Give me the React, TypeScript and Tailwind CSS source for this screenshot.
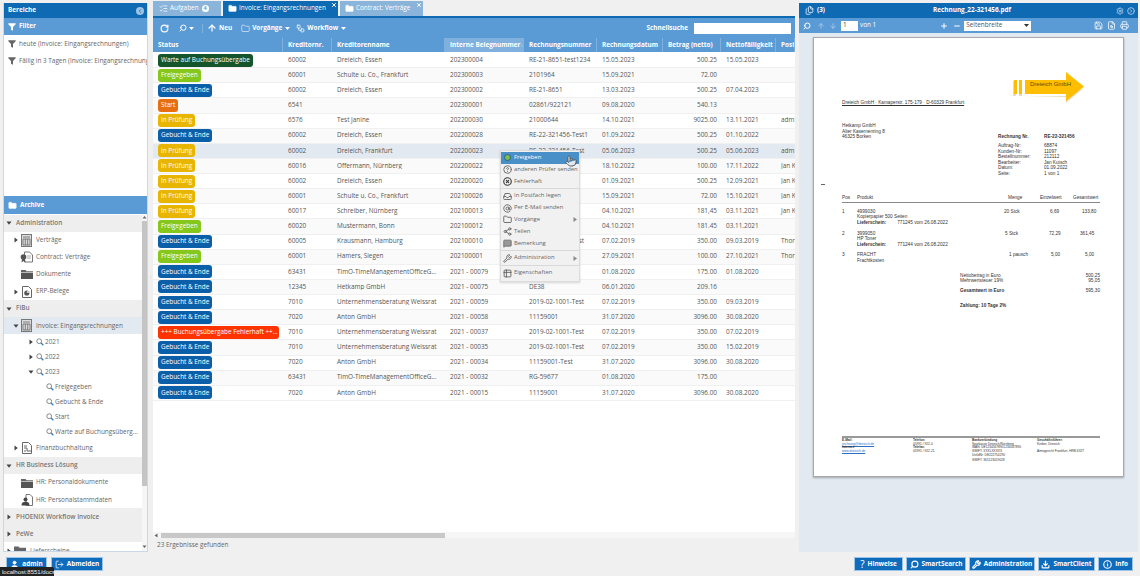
import React from 'react';
import {
  Search, RotateCw, ArrowUp, ArrowDown, Folder, Workflow, X, ChevronLeft, Plus, Minus, Save, FileSearch, Printer,
  Settings, ChevronRightCircle, HelpCircle, XCircle, Inbox, AtSign, Share2, Wrench, Download, Info, User, LogOut, Files, ListChecks, MessageSquare, Table2, Pointer,
} from 'lucide-react';

type Row = [string, string, string, string, string, string, string, string, string];

const W = 'Warte auf Buchungsübergabe';
const F = 'Freigegeben';
const G = 'Gebucht & Ende';
const S = 'Start';
const P = 'In Prüfung';
const E = '+++ Buchungsübergabe Fehlerhaft ++...';

const rows: Row[] = [
  [W, '60002', 'Dreieich, Essen', '202300004', 'RE-21-8651-test1234', '15.05.2023', '500.25', '15.05.2023', ''],
  [F, '60001', 'Schulte u. Co., Frankfurt', '202300003', '2101964', '15.09.2021', '72.00', '', ''],
  [G, '60002', 'Dreieich, Essen', '202300002', 'RE-21-8651', '13.03.2023', '500.25', '07.04.2023', ''],
  [S, '6541', '', '202300001', '02861/922121', '09.08.2020', '540.13', '', ''],
  [P, '6576', 'Test Janine', '202200030', '21000644', '14.10.2021', '9025.00', '13.11.2021', 'adm'],
  [G, '60002', 'Dreieich, Essen', '202200028', 'RE-22-321456-Test1', '01.09.2022', '500.25', '01.10.2022', ''],
  [P, '60002', 'Dreieich, Frankfurt', '202200023', 'RE-22-321456-Test', '05.06.2023', '500.25', '05.06.2023', 'adm'],
  [P, '60016', 'Offermann, Nürnberg', '202200022', '', '18.10.2022', '100.00', '17.11.2022', 'Jan K'],
  [P, '60002', 'Dreieich, Essen', '202200020', '', '01.09.2021', '500.25', '12.09.2021', 'Jan K'],
  [P, '60001', 'Schulte u. Co., Frankfurt', '202100026', '', '15.09.2021', '72.00', '15.10.2021', 'Jan K'],
  [P, '60017', 'Schreiber, Nürnberg', '202100013', '', '04.10.2021', '181,45', '03.11.2021', 'Jan K'],
  [F, '60020', 'Mustermann, Bonn', '202100012', '', '04.10.2021', '181.45', '03.11.2021', ''],
  [G, '60005', 'Krausmann, Hamburg', '202100010', '2019-02-1001-Test', '07.02.2019', '350.00', '09.03.2019', 'Thor'],
  [F, '60001', 'Hamers, Siegen', '202100001', '', '27.09.2021', '100.00', '27.10.2021', 'Thor'],
  [G, '63431', 'TimO-TimeManagementOfficeG...', '2021 - 00079', '', '01.08.2020', '175.00', '01.08.2020', ''],
  [G, '12345', 'Hetkamp GmbH', '2021 - 00075', 'DE38', '06.01.2020', '209.16', '', ''],
  [G, '7010', 'Unternehmensberatung Weissrat', '2021 - 00059', '2019-02-1001-Test', '07.02.2019', '350.00', '09.03.2019', ''],
  [G, '7020', 'Anton GmbH', '2021 - 00058', '11159001', '31.07.2020', '3096.00', '30.08.2020', ''],
  [E, '7010', 'Unternehmensberatung Weissrat', '2021 - 00037', '2019-02-1001-Test', '07.02.2019', '350.00', '07.02.2019', ''],
  [G, '7010', 'Unternehmensberatung Weissrat', '2021 - 00035', '2019-02-1001-Test', '07.02.2019', '350.00', '15.02.2019', ''],
  [G, '7020', 'Anton GmbH', '2021 - 00034', '11159001-Test', '31.07.2020', '3096.00', '30.08.2020', ''],
  [G, '63431', 'TimO-TimeManagementOfficeG...', '2021 - 00032', 'RG-59677', '01.08.2020', '175.00', '', ''],
  [G, '7020', 'Anton GmbH', '2021 - 00015', '11159001', '31.07.2020', '3096.00', '30.08.2020', ''],
];

const badgeClass: Record<string, string> = {
  [W]: 'bg-[#14552c]',
  [F]: 'bg-[#86c71c]',
  [G]: 'bg-[#0b5fa9]',
  [S]: 'bg-[#e86f10]',
  [P]: 'bg-[#e8b500]',
  [E]: 'bg-[#ff3300]',
};

const cols = 'grid grid-cols-[130px_49px_113px_79px_73px_66px_58px_55px_19px]';

const Caret = ({ open = false }: { open?: boolean }) => (
  <svg width="6" height="6" viewBox="0 0 6 6" className="shrink-0 text-[#444]">
    {open ? <path d="M0.5 1.5h5L3 4.8z" fill="currentColor" /> : <path d="M1.5 0.5v5L4.8 3z" fill="currentColor" />}
  </svg>
);

const DownCaret = () => (
  <svg width="5" height="3" viewBox="0 0 5 3" className="shrink-0"><path d="M0 0h5L2.5 3z" fill="currentColor" /></svg>
);

const Funnel = ({ size = 8, color = '#666' }: { size?: number; color?: string }) => (
  <svg width={size} height={size} viewBox="0 0 12 12" className="shrink-0">
    <path d="M0.5 0.5h11v1.5L7.5 6v5.5L4.5 10V6L0.5 2z" fill={color} />
  </svg>
);

const Mag = () => (
  <svg width="8" height="8" viewBox="0 0 12 12" className="shrink-0">
    <circle cx="4.8" cy="4.8" r="3.6" fill="#fff" stroke="#777" strokeWidth="1.3" />
    <path d="M7.6 7.6l3.4 3.4" stroke="#2f80c8" strokeWidth="2" />
  </svg>
);

const TableDoc = () => (
  <svg width="11" height="13" viewBox="0 0 11 13" className="shrink-0">
    <rect x="0.5" y="0.5" width="10" height="12" fill="#ddd" stroke="#777" />
    <path d="M2 3h7M2 5h7v6H2zM4.3 5v6M6.7 5v6" fill="none" stroke="#666" strokeWidth="0.8" />
  </svg>
);

const ContractDoc = () => (
  <svg width="13" height="12" viewBox="0 0 13 12" className="shrink-0">
    <path d="M4.5 1h5l3 3v7h-8z" fill="#fff" stroke="#777" />
    <circle cx="3.5" cy="6" r="2.8" fill="#555" />
    <path d="M2 8l-0.5 3.5L3.5 10l2 1.5L5 8z" fill="#555" />
    <path d="M7 5h4M7 7h4" stroke="#888" strokeWidth="0.7" />
  </svg>
);

const DarkFolder = () => (
  <svg width="12" height="10" viewBox="0 0 12 10" className="shrink-0">
    <path d="M0 1h4.5l1 1.3H12V3H0z" fill="#666" />
    <path d="M0 3.6h12V10H0z" fill="#555" />
  </svg>
);

const ChartDoc = () => (
  <svg width="10" height="12" viewBox="0 0 10 12" className="shrink-0">
    <path d="M0.5 0.5h6l3 3v8h-9z" fill="#fff" stroke="#666" />
    <circle cx="4.8" cy="7" r="2.6" fill="#555" />
    <path d="M4.8 7V4.4A2.6 2.6 0 0 1 7.4 7z" fill="#ccc" />
  </svg>
);

const LinesDoc = () => (
  <svg width="10" height="12" viewBox="0 0 10 12" className="shrink-0">
    <path d="M0.5 0.5h6l3 3v8h-9z" fill="#fff" stroke="#666" />
    <path d="M2 4h3M2 6h3v3h4M2 9h2" fill="none" stroke="#555" strokeWidth="0.9" />
  </svg>
);

const PersonDoc = () => (
  <svg width="12" height="12" viewBox="0 0 12 12" className="shrink-0">
    <path d="M5 0.5h4l2.500 2.500v8.500H5z" fill="#fff" stroke="#777" />
    <circle cx="4.500" cy="5.500" r="2" fill="#444" />
    <path d="M0.500 11.500c0-3 1.500-3.800 4-3.800s4 .8 4 3.800z" fill="#444" />
  </svg>
);

const GreenFolder = () => (
  <svg width="12" height="10" viewBox="0 0 12 10" className="shrink-0">
    <path d="M0 0.500h4.500l1 1.300H12V10H0z" fill="#666" />
    <rect x="5" y="5" width="6" height="5" fill="#7ab648" />
  </svg>
);

const GroupHeader = ({ label, open = false }: { label: string; open?: boolean }) => (
  <div className="flex h-[17.100px] items-center bg-[#eeeeee] pl-[2px] text-[#777] font-semibold">
    <Caret open={open} />
    <span className="ml-[4px]">{label}</span>
  </div>
);

const TreeItem = ({ label, icon, arrow = false, open = false, selected = false }: { label: string; icon: React.ReactNode; arrow?: boolean; open?: boolean; selected?: boolean }) => (
  <div className={`flex h-[17.100px] items-center ${selected ? 'bg-[#e3e9f1]' : ''}`}>
    <div className="flex w-[16px] justify-end pr-[1px]">{arrow && <Caret open={open} />}</div>
    <div className="flex w-[13px] justify-center">{icon}</div>
    <span className="ml-[3px] whitespace-nowrap text-[#666]">{label}</span>
  </div>
);

const YearItem = ({ label, open = false }: { label: string; open?: boolean }) => (
  <div className="flex h-[15.100px] items-center pl-[24px]">
    <Caret open={open} />
    <span className="ml-[2px]"><Mag /></span>
    <span className="ml-[1px] text-[#666]">{label}</span>
  </div>
);

const SearchItem = ({ label }: { label: string }) => (
  <div className="flex h-[15.100px] items-center pl-[42px]">
    <Mag />
    <span className="ml-[1px] whitespace-nowrap text-[#666]">{label}</span>
  </div>
);

const FooterButton = ({ icon, label, className }: { icon: React.ReactNode; label: string; className: string }) => (
  <div className={`flex h-[14px] items-center justify-center gap-[3px] border border-[#9cc3e6] bg-[#0f6cbd] text-[6.400px] font-bold text-white ${className}`}>
    {icon}
    <span>{label}</span>
  </div>
);

const MenuItem = ({ icon, label, active = false, sub = false }: { icon: React.ReactNode; label: string; active?: boolean; sub?: boolean }) => (
  <div className={`flex h-[11.800px] items-center pl-[2px] ${active ? 'bg-[#4a90c8] text-white' : 'text-[#666]'}`}>
    <span className="flex w-[9px] justify-center">{icon}</span>
    <span className="ml-[2px] flex-1 whitespace-nowrap">{label}</span>
    {sub && <span className="mr-[2px] text-[#888]"><svg width="4" height="5" viewBox="0 0 4 5"><path d="M0.500 0v5L4 2.500z" fill="currentColor" /></svg></span>}
  </div>
);

const Sep = () => <div className="my-[1px] h-[1px] bg-[#d8d8d8]" />;

const PdfLine = ({ children, className = '' }: { children?: React.ReactNode; className?: string }) => (
  <div className={`h-[5.500px] whitespace-nowrap leading-[5.500px] ${className}`}>{children}</div>
);

const PdfGrid = ({ children }: { children: React.ReactNode }) => (
  <div className="grid h-[5.500px] grid-cols-[15px_147px_36px_33px_27px] whitespace-nowrap leading-[5.500px]">{children}</div>
);

const PdfPage = () => (
  <div className="ml-[14px] mt-[4px] flex h-[440px] w-[311px] flex-col border border-[#a9a9a9] bg-white pl-[28px] pr-[23px] pb-[13px] font-['Liberation_Sans',sans-serif] text-[4.700px] text-[#333] shadow-[0_1px_2px_rgba(0,0,0,0.3)]">
    <div className="mt-[33px] flex h-[35px] items-end justify-between">
      <span className="underline">Dreieich GmbH · Kamaperstr. 175-179 · D-60329 Frankfurt</span>
      <div className="relative mr-[15px] h-[32px] w-[72px] self-start">
        <svg width="72" height="32" viewBox="0 0 72 32">
          <path d="M0 10h3v15H0zM6 10h3v15H6zM12 25h41v7l19-16L53 26z" fill="#e8dcb8" />
          <path d="M1 9h3v14H1zM6 9h3v14H6zM12 9h41V1l18 14.500L53 30v-7H12z" fill="#ffbf00" />
        </svg>
        <span className="absolute left-[17px] top-[9.500px] whitespace-nowrap text-[6px] leading-[7px] text-[#5a4a00]">Dreieich GmbH</span>
      </div>
    </div>
    <div className="mt-[17px] flex">
      <div className="w-[156px]">
        <PdfLine>Hetkamp GmbH</PdfLine>
        <PdfLine>Alter Kasernenring 8</PdfLine>
        <PdfLine>46325 Borken</PdfLine>
      </div>
      <div className="pt-[10.500px]">
        <div className="flex font-bold">
          <PdfLine className="w-[46px]">Rechnung Nr.</PdfLine>
          <PdfLine>RE-22-321456</PdfLine>
        </div>
        <div className="mt-[4px] grid grid-cols-[46px_auto]">
          <PdfLine>Auftrag-Nr:</PdfLine><PdfLine>68874</PdfLine>
          <PdfLine>Kunden-Nr:</PdfLine><PdfLine>11097</PdfLine>
          <PdfLine>Bestellnummer:</PdfLine><PdfLine>212112</PdfLine>
          <PdfLine>Bearbeiter:</PdfLine><PdfLine>Jan Kutsch</PdfLine>
          <PdfLine>Datum:</PdfLine><PdfLine>01.09.2022</PdfLine>
          <PdfLine>Seite:</PdfLine><PdfLine>1 von 1</PdfLine>
        </div>
      </div>
    </div>
    <div className="ml-[-21px] mt-[7.500px] h-[1px] w-[4px] bg-[#666]" />
    <div className="mt-[10.500px]">
      <PdfGrid>
        <span>Pos</span><span>Produkt</span><span className="pl-[4px]">Menge</span><span>Einzelwert</span><span>Gesamtwert</span>
      </PdfGrid>
    </div>
    <div className="mt-[1px] h-[1.500px] bg-[#888]" />
    <div className="mt-[5.500px]">
      <PdfGrid><span>1</span><span>4999030</span><span>20 Stck</span><span className="pl-[10px]">6,69</span><span className="pl-[9px]">133,80</span></PdfGrid>
      <PdfGrid><span /><span>Kopierpapier 500 Seiten</span></PdfGrid>
      <PdfGrid><span /><span className="font-bold">Lieferschein:<span className="ml-[11px] font-normal">771245 vom 26.08.2022</span></span></PdfGrid>
    </div>
    <div className="mt-[5.500px]">
      <PdfGrid><span>2</span><span>3999050</span><span className="pl-[1px]">5 Stck</span><span className="pl-[9px]">72,29</span><span className="pl-[7px]">361,45</span></PdfGrid>
      <PdfGrid><span /><span>HP Toner</span></PdfGrid>
      <PdfGrid><span /><span className="font-bold">Lieferschein:<span className="ml-[11px] font-normal">771244 vom 26.08.2022</span></span></PdfGrid>
    </div>
    <div className="mt-[5px]">
      <PdfGrid><span>3</span><span>FRACHT</span><span className="pl-[5px]">1 pausch</span><span className="pl-[11px]">5,00</span><span className="pl-[12px]">5,00</span></PdfGrid>
      <PdfGrid><span /><span>Frachtkosten</span></PdfGrid>
    </div>
    <div className="ml-[118px] mt-[9.500px]">
      <div className="flex justify-between"><PdfLine>Nettobetrag in Euro</PdfLine><PdfLine>500,25</PdfLine></div>
      <div className="flex justify-between"><PdfLine>Mehrwertsteuer 19%</PdfLine><PdfLine>95,05</PdfLine></div>
      <div className="mt-[4.500px] flex justify-between font-bold"><PdfLine>Gesamtwert in Euro</PdfLine><PdfLine className="font-normal">595,30</PdfLine></div>
      <PdfLine className="mt-[9.500px] font-bold">Zahlung: 10 Tage 2%</PdfLine>
    </div>
    <div className="mt-auto h-[2px] bg-[#999]" />
    <div className="mt-[1px] grid grid-cols-[71px_59px_65px_1fr] text-[3.200px] leading-[3.600px]">
      <div>
        <div className="font-bold">E-Mail:</div>
        <div className="text-[#2a6fc4] underline">rechnung@dreieich.de</div>
        <div className="font-bold">Internet:</div>
        <div className="text-[#2a6fc4] underline">www.dreieich.de</div>
      </div>
      <div>
        <div className="font-bold">Telefon:</div>
        <div>05991 / 922-0</div>
        <div className="font-bold">Telefax:</div>
        <div>05991 / 922-21</div>
      </div>
      <div>
        <div className="font-bold">Bankverbindung</div>
        <div>Sparkasse Dreieich/Nürnberg</div>
        <div>IBAN: DE12345678901234567890</div>
        <div>SWIFT: XXXLXXXXX</div>
        <div className="mt-[0.500px]">UstIdNr: DE222754290</div>
        <div className="mt-[2px]">SWIFT: 365123019028</div>
      </div>
      <div>
        <div className="font-bold">Geschäftsführer:</div>
        <div>Kerber, Dreieich</div>
        <div className="mt-[3.600px]">Amtsgericht Frankfurt, HRB 6327</div>
      </div>
    </div>
  </div>
);

export default function App() {
  return (
    <div className="relative flex h-[576px] w-[1140px] flex-col overflow-hidden bg-[#f0f0f0] font-['Open_Sans',sans-serif] text-[6.400px] leading-none text-[#555]">
      <div className="flex h-[553px] pl-[3px]">
        {/* Bereiche */}
        <div className="mt-[3px] flex h-[549px] w-[145px] flex-col overflow-hidden border-x border-b border-[#c9d8e8] bg-white">
          <div className="flex h-[15px] shrink-0 items-center justify-between bg-[#0f6ab4] pl-[4px] pr-[3px] font-bold text-white">
            <span>Bereiche</span>
            <span className="flex h-[8px] w-[8px] items-center justify-center rounded-full bg-[#9cc3e6]"><ChevronLeft size={6} strokeWidth={3} className="text-[#0f6ab4]" /></span>
          </div>
          <div className="flex h-[17px] shrink-0 items-center gap-[3px] bg-[#5b9bd5] pl-[4px] font-bold text-white">
            <Funnel color="#fff" />
            <span>Filter</span>
          </div>
          <div className="flex h-[161px] shrink-0 flex-col overflow-hidden whitespace-nowrap pt-[1px] text-[#666]">
            <div className="flex h-[16.500px] items-center gap-[3px] pl-[4px]"><Funnel />heute (Invoice: Eingangsrechnungen)</div>
            <div className="flex h-[16.500px] items-center gap-[3px] pl-[4px]"><Funnel />Fällig in 3 Tagen (Invoice: Eingangsrechnung</div>
          </div>
          <div className="flex h-[18px] shrink-0 items-center gap-[3px] bg-[#5b9bd5] pl-[4px] font-bold text-white">
            <Folder size={9} fill="#fff" strokeWidth={1} />
            <span>Archive</span>
          </div>
          <div className="flex min-h-0 flex-1">
            <div className="w-[139px] overflow-hidden pt-[0.600px]">
              <GroupHeader label="Administration" open />
              <TreeItem label="Verträge" icon={<TableDoc />} arrow />
              <TreeItem label="Contract: Verträge" icon={<ContractDoc />} />
              <TreeItem label="Dokumente" icon={<DarkFolder />} />
              <TreeItem label="ERP-Belege" icon={<ChartDoc />} arrow />
              <GroupHeader label="FiBu" open />
              <TreeItem label="Invoice: Eingangsrechnungen" icon={<TableDoc />} arrow open selected />
              <YearItem label="2021" />
              <YearItem label="2022" />
              <YearItem label="2023" open />
              <SearchItem label="Freigegeben" />
              <SearchItem label="Gebucht & Ende" />
              <SearchItem label="Start" />
              <SearchItem label="Warte auf Buchungsüberg..." />
              <TreeItem label="Finanzbuchhaltung" icon={<LinesDoc />} arrow />
              <GroupHeader label="HR Business Lösung" open />
              <TreeItem label="HR: Personaldokumente" icon={<DarkFolder />} />
              <TreeItem label="HR: Personalstammdaten" icon={<PersonDoc />} />
              <GroupHeader label="PHOENIX Workflow Invoice" />
              <GroupHeader label="PeWe" />
              <div className="flex h-[17px] items-center pl-[2px] text-[#666]">
                <Caret />
                <span className="ml-[2px]"><GreenFolder /></span>
                <span className="ml-[4px]">Lieferscheine</span>
              </div>
            </div>
            <div className="flex w-[5px] flex-col items-center bg-[#f6f6f6] pt-[1px]">
              <svg width="5" height="4" viewBox="0 0 5 4" className="shrink-0 text-[#666]"><path d="M2.500 1L4.500 3.500h-4z" fill="currentColor" /></svg>
              <div className="mt-[2px] h-[265px] w-full bg-[#c4c4c4]" />
              <svg width="5" height="4" viewBox="0 0 5 4" className="mt-auto mb-[2px] shrink-0 text-[#666]"><path d="M2.500 3L4.500 0.500h-4z" fill="currentColor" /></svg>
            </div>
          </div>
        </div>

        <div className="flex w-[5px] items-center justify-center"><ChevronLeft size={6} className="text-[#ccc]" /></div>

        {/* Liste */}
        <div className="flex h-[553px] w-[642px] flex-col">
          <div className="flex h-[16px] shrink-0 items-end gap-[2px] pt-[1px] whitespace-nowrap">
            <div className="flex h-[15px] w-[68px] items-center gap-[2px] bg-[#8ab4da] pl-[6px] text-white">
              <ListChecks size={9} />
              <span>Aufgaben</span>
              <span className="ml-[1px] flex h-[7px] w-[7px] items-center justify-center rounded-full bg-white text-[5.500px] font-bold text-[#5b9bd5]">4</span>
            </div>
            <div className="relative flex h-[15px] w-[115px] items-center gap-[2px] bg-[#0f6ab4] pl-[5px] text-white">
              <Folder size={9} fill="#fff" strokeWidth={1} />
              <span>Invoice: Eingangsrechnungen</span>
              <X size={6} strokeWidth={4} className="absolute right-[1px] top-[1px]" />
            </div>
            <div className="relative flex h-[15px] w-[83px] items-center gap-[2px] bg-[#8ab4da] pl-[5px] text-white">
              <Folder size={9} fill="#fff" strokeWidth={1} />
              <span>Contract: Verträge</span>
              <X size={6} strokeWidth={4} className="absolute right-[1px] top-[1px]" />
            </div>
          </div>
          <div className="h-[2px] shrink-0 bg-[#0f6ab4]" />
          <div className="flex h-[20px] shrink-0 items-center bg-[#5b9bd5] font-bold text-white">
            <RotateCw size={9} strokeWidth={3} className="ml-[7px]" />
            <Search size={8} strokeWidth={3} className="ml-[10px] -scale-x-100" />
            <span className="ml-[2px]"><DownCaret /></span>
            <div className="ml-[8px] h-[9px] w-[1px] bg-[#7fb0de]" />
            <ArrowUp size={10} strokeWidth={3} className="ml-[4px]" />
            <span className="ml-[2px]">Neu</span>
            <Folder size={9} strokeWidth={1.500} className="ml-[9px]" />
            <span className="ml-[2px]">Vorgänge</span>
            <span className="ml-[3px]"><DownCaret /></span>
            <Workflow size={9} className="ml-[6px]" />
            <span className="ml-[2px]">Workflow</span>
            <span className="ml-[3px]"><DownCaret /></span>
            <span className="ml-auto">Schnellsuche</span>
            <div className="ml-[6px] mr-[4px] h-[11px] w-[97px] bg-white" />
          </div>
          <div className={`${cols} h-[14px] shrink-0 items-center bg-[#5b9bd5] font-bold text-white`}>
            {['Status', 'Kreditornr.', 'Kreditorenname', 'Interne Belegnummer', 'Rechnungsnummer', 'Rechnungsdatum', 'Betrag (netto)', 'Nettofälligkeit', 'Post'].map((h, i) => (
              <div key={h} className={`flex h-full items-center overflow-hidden whitespace-nowrap border-r border-[#7fb0de] pl-[5px] ${i === 3 ? 'bg-[#7fb0de]' : ''}`}>
                {h}
                {i === 3 && <ArrowDown size={7} strokeWidth={3} className="ml-[1px]" />}
              </div>
            ))}
          </div>
          <div className="relative min-h-0 flex-1 overflow-hidden bg-white pt-[1px]">
            {rows.map((r, idx) => (
              <div key={idx} className={`${cols} h-[15.140px] items-center border-b border-[#f0f0f0] ${idx === 6 ? 'bg-[#e3e9f1]' : idx % 2 === 1 ? 'bg-[#fafafa]' : 'bg-white'}`}>
                <div className="pl-[5px]">
                  <span className={`inline-flex h-[13px] max-w-[121px] items-center overflow-hidden whitespace-nowrap rounded-[3px] px-[3px] text-white ${badgeClass[r[0]]}`}>{r[0]}</span>
                </div>
                {r.slice(1).map((c, i) => (
                  <div key={i} className={`overflow-hidden whitespace-nowrap ${i === 5 ? 'pr-[4px] text-right' : 'pl-[5px]'}`}>{c}</div>
                ))}
              </div>
            ))}
            {/* Kontextmenü */}
            <div className="absolute left-[347px] top-[98px] w-[80px] border border-[#dcdcdc] bg-[#f1f1f1] pb-[2px] pt-[1px] text-[5.900px] shadow-[0_1px_2px_rgba(0,0,0,0.15)]">
              <MenuItem active label="Freigeben" icon={<span className="block h-[7px] w-[7px] rounded-full border border-[#2a5f8a] bg-[#7cc04a]" />} />
              <MenuItem label="anderen Prüfer senden" icon={<HelpCircle size={9} strokeWidth={2.500} />} />
              <MenuItem label="Fehlerhaft" icon={<XCircle size={9} strokeWidth={3} className="text-[#333]" />} />
              <Sep />
              <MenuItem label="In Postfach legen" icon={<Inbox size={9} strokeWidth={2.500} />} />
              <MenuItem label="Per E-Mail senden" icon={<AtSign size={9} strokeWidth={2.500} />} />
              <MenuItem label="Vorgänge" sub icon={<Folder size={9} strokeWidth={2.500} />} />
              <MenuItem label="Teilen" icon={<Share2 size={9} strokeWidth={2.500} />} />
              <MenuItem label="Bemerkung" icon={<MessageSquare size={9} fill="#999" />} />
              <Sep />
              <MenuItem label="Administration" sub icon={<Wrench size={9} strokeWidth={2.500} />} />
              <Sep />
              <MenuItem label="Eigenschaften" icon={<Table2 size={9} strokeWidth={2.500} />} />
            </div>
            <Pointer size={12} fill="#dfe7ef" strokeWidth={1.500} className="absolute left-[412px] top-[103px] text-[#444]" />
          </div>
          <div className="flex h-[6px] shrink-0 items-center bg-[#f6f6f6] pl-[1px]">
            <svg width="4" height="5" viewBox="0 0 4 5" className="text-[#666]"><path d="M3.500 0.500v4L0.500 2.500z" fill="currentColor" /></svg>
            <div className="ml-[3px] h-[5px] w-[284px] bg-[#c8c8c8]" />
          </div>
          <div className="flex h-[15px] shrink-0 items-center pl-[4px] text-[#666]">23 Ergebnisse gefunden</div>
        </div>

        <div className="flex w-[4px] items-center justify-center" />

        {/* Viewer */}
        <div className="mt-[3px] flex h-[549px] w-[339px] flex-col overflow-hidden bg-[#e3e9f1]">
          <div className="flex h-[15px] shrink-0 items-center bg-[#0f6ab4] pl-[6px] pr-[3px] font-bold text-white">
            <Files size={9} />
            <span className="ml-[3px] w-[116px]">(3)</span>
            <span className="text-[6.400px]">Rechnung_22-321456.pdf</span>
            <Settings size={8} strokeWidth={3} className="ml-auto text-[#9cc3e6]" />
            <ChevronRightCircle size={8} strokeWidth={3} className="ml-[3px] text-[#9cc3e6]" />
          </div>
          <div className="flex h-[15px] shrink-0 items-center bg-[#5b9bd5] pl-[4px] pr-[9px] text-white">
            <Search size={8} strokeWidth={3} className="-scale-x-100" />
            <ArrowUp size={8} strokeWidth={2.500} className="ml-[6px] text-[#a9cbea]" />
            <ArrowDown size={8} strokeWidth={2.500} className="ml-[4px] text-[#a9cbea]" />
            <div className="ml-[4px] flex h-[10px] w-[17px] items-center bg-white pl-[2px] text-[#444]">1</div>
            <span className="ml-[2px]">von 1</span>
            <Plus size={8} strokeWidth={3} className="ml-[64px]" />
            <Minus size={8} strokeWidth={3} className="ml-[5px]" />
            <div className="ml-[3px] flex h-[10px] w-[67px] items-center justify-between bg-white px-[2px] text-[#555]">
              <span>Seitenbreite</span>
              <span className="text-[#333]"><DownCaret /></span>
            </div>
            <Save size={9} className="ml-auto" />
            <FileSearch size={9} className="ml-[4px]" />
            <Printer size={9} className="ml-[4px]" />
          </div>
          <PdfPage />
        </div>
      </div>

      {/* Fußleiste */}
      <div className="flex h-[23px] items-start pl-[6px] pr-[7px] pt-[4px]">
        <FooterButton className="w-[41px]" label="admin" icon={<User size={9} fill="#fff" />} />
        <FooterButton className="ml-[4px] w-[52px]" label="Abmelden" icon={<LogOut size={9} />} />
        <FooterButton className="ml-auto w-[49px]" label="Hinweise" icon={<span className="text-[10px] font-normal">?</span>} />
        <FooterButton className="ml-[3px] w-[60px]" label="SmartSearch" icon={<Search size={9} strokeWidth={3} className="-scale-x-100" />} />
        <FooterButton className="ml-[3px] w-[66px]" label="Administration" icon={<Wrench size={9} strokeWidth={3} />} />
        <FooterButton className="ml-[3px] w-[57px]" label="SmartClient" icon={<Download size={9} strokeWidth={3} />} />
        <FooterButton className="ml-[3px] w-[35px]" label="Info" icon={<Info size={9} strokeWidth={3} />} />
      </div>
      <div className="absolute bottom-0 left-0 flex h-[9px] w-[54px] items-center rounded-tr-[2px] bg-[#222] pl-[2px] font-['Liberation_Sans',sans-serif] text-[6px] text-[#eee]">localhost:8551/docs#</div>
    </div>
  );
}
